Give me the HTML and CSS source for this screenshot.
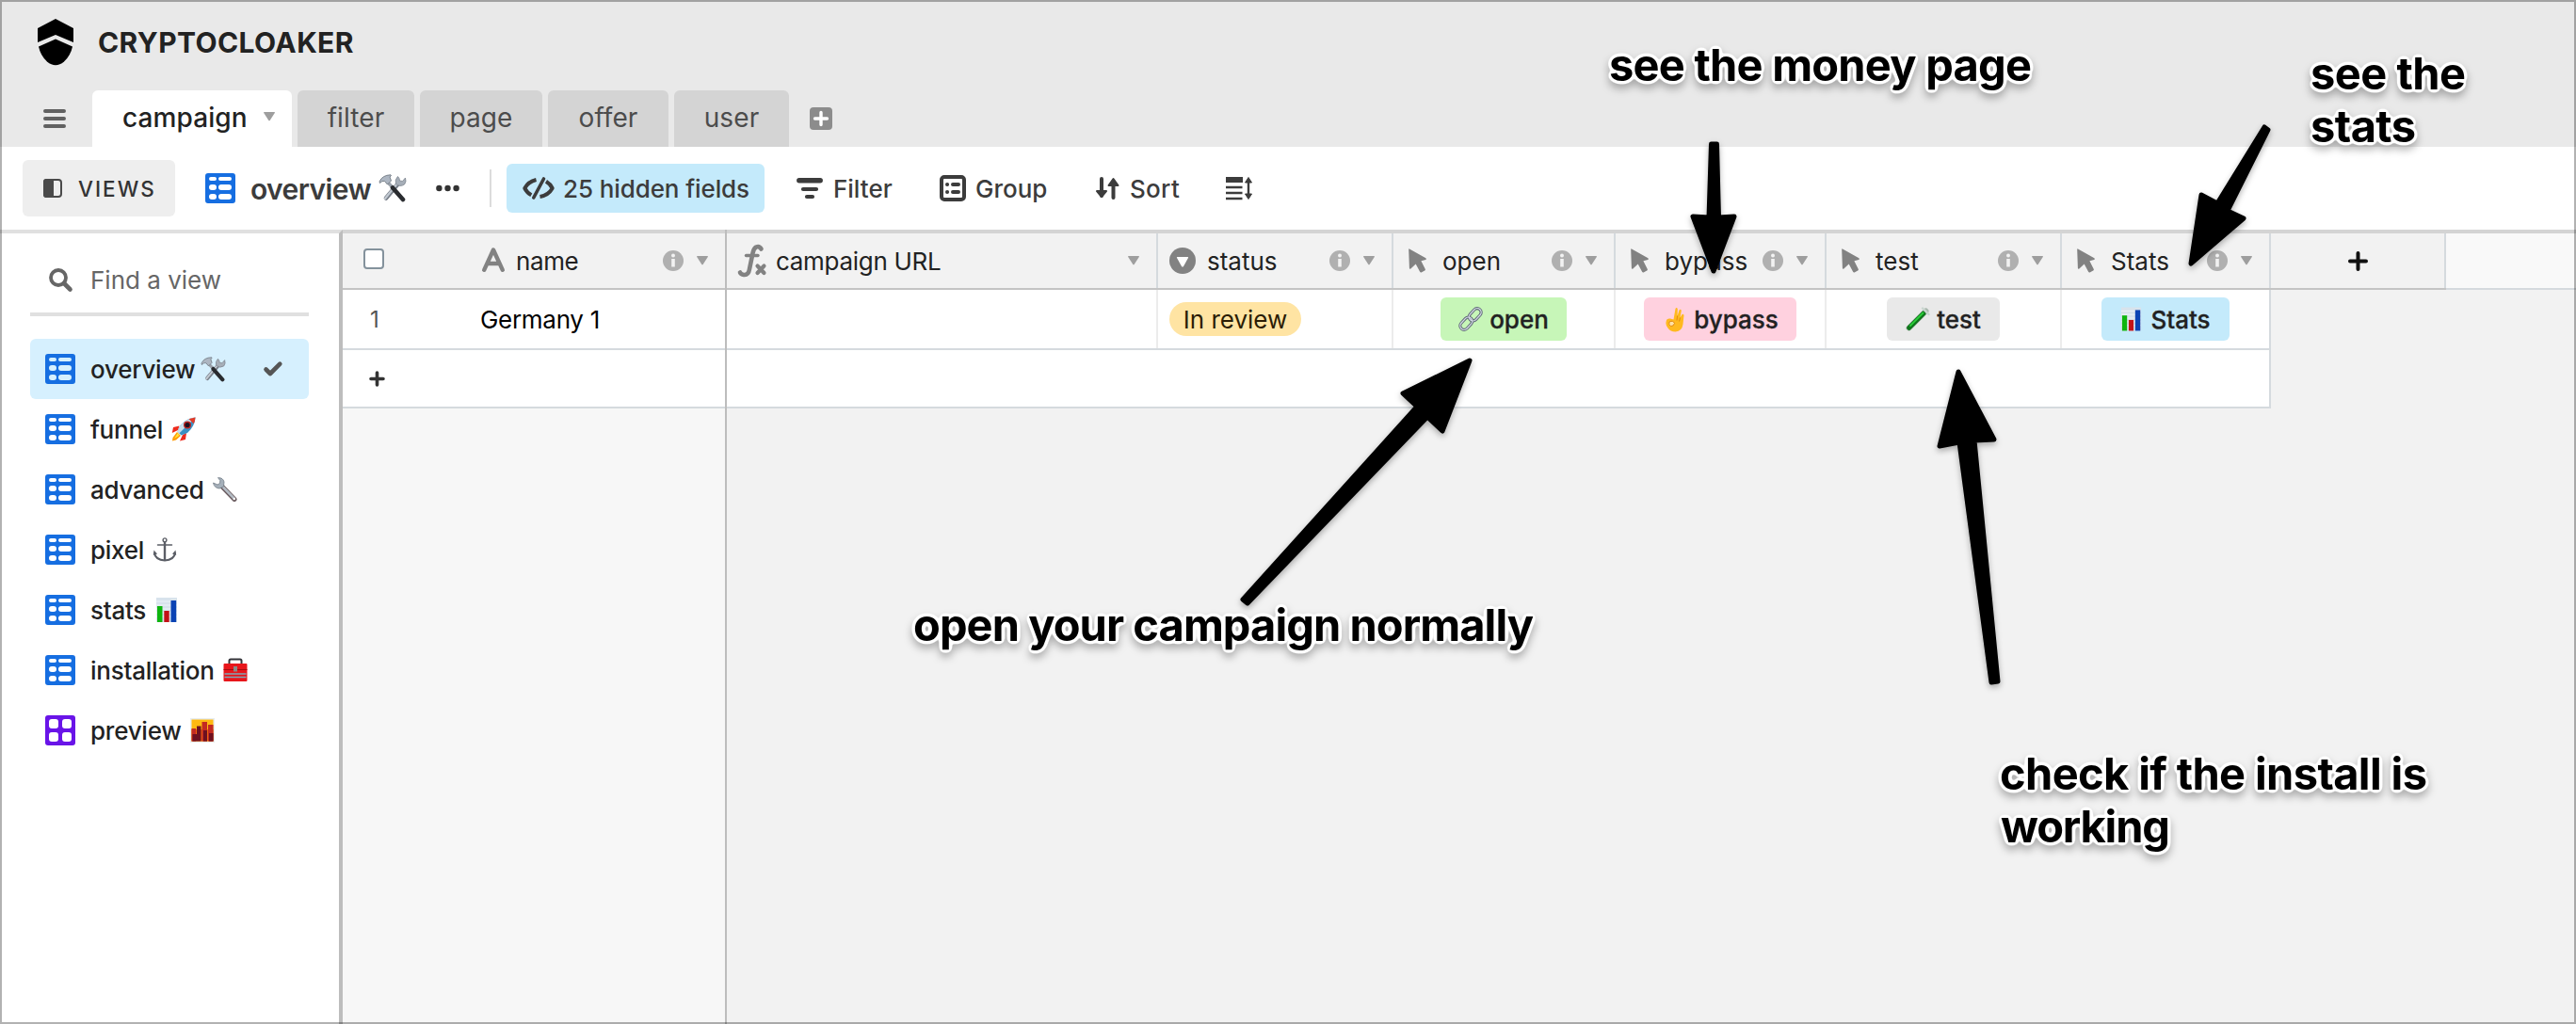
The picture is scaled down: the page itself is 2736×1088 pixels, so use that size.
FILE: index.html
```html
<!DOCTYPE html>
<html lang="en">
<head>
<meta charset="utf-8">
<title>CRYPTOCLOAKER</title>
<link rel="stylesheet" href="styles.css">
</head>
<body>
<svg width="0" height="0" class="defs">
  <defs>
    <symbol id="grid" viewBox="0 0 32 32"><path fill="currentColor" fill-rule="evenodd" d="M3 0H29a3 3 0 0 1 3 3V29a3 3 0 0 1-3 3H3a3 3 0 0 1-3-3V3a3 3 0 0 1 3-3ZM6 4a2 2 0 0 0 0 4H10a2 2 0 0 0 0-4ZM16 4a2 2 0 0 0 0 4H26a2 2 0 0 0 0-4ZM7 12a3 3 0 0 0 0 6H9a3 3 0 0 0 0-6ZM17 12a3 3 0 0 0 0 6H25a3 3 0 0 0 0-6ZM7 22a3 3 0 0 0 0 6H9a3 3 0 0 0 0-6ZM17 22a3 3 0 0 0 0 6H25a3 3 0 0 0 0-6Z"/></symbol>
    <symbol id="gallery" viewBox="0 0 32 32"><rect width="32" height="32" rx="3" fill="currentColor"/><g fill="#fff"><rect x="4" y="4" width="10" height="10" rx="3"/><rect x="18" y="4" width="10" height="10" rx="3"/><rect x="4" y="18" width="10" height="10" rx="3"/><rect x="18" y="18" width="10" height="10" rx="3"/></g></symbol>
    <symbol id="info" viewBox="0 0 22 22"><circle cx="11" cy="11" r="11" fill="#b0b0b0"/><circle cx="11" cy="5.6" r="2" fill="#f2f2f2"/><path d="M9.2 9h3.6v8.5h-3.6z" fill="#f2f2f2"/></symbol>
    <symbol id="caret" viewBox="0 0 12 10"><path d="M.6 0H11.4Q12.3 0 11.8 1L6.8 8.8Q6 9.9 5.2 8.8L.2 1Q-.3 0 .6 0Z" fill="#9e9e9e"/></symbol>
    <symbol id="cursor" viewBox="0 0 20 26"><path d="M1 .4 18.4 10.3Q19.6 11.3 18.2 12L13.4 13.3 17.8 22Q18.2 23 17.2 23.6L13.6 25.4Q12.6 25.7 12.1 24.8L7.7 16.6 2.4 21.4Q1.1 22.3.9 20.8L.2 1.2Q.2 0 1 .4Z" fill="#828282"/></symbol>
    <symbol id="tools" viewBox="0 0 30 30"><path d="M8 25.5 21 10" stroke="#777e88" stroke-width="4.6" stroke-linecap="round"/><path d="M7 26 20 10" stroke="#c3cad2" stroke-width="2.2" stroke-linecap="round"/><path d="M20.5 2.5Q17 6 18.5 10.5 23 14 27.5 11 30 8 28.5 4L25.5 7.5 22.5 7 22 4.5Z" fill="#a6aeb8" stroke="#7d858f" stroke-width=".8"/><path d="M9.5 8.5 15 14" stroke="#9aa1aa" stroke-width="3.4"/><path d="M15 14.5 26 27" stroke="#292b2f" stroke-width="4.6" stroke-linecap="round"/><path d="M1 8Q4 1 13 .8 14.5 1.2 12 3L13.5 7 9.5 11 6.5 7.5Q4 6.5 1.500 9.500Z" fill="#adb6c2" stroke="#717982" stroke-width=".9"/></symbol>
    <symbol id="rocket" viewBox="0 0 26 26"><path d="M8.500 9.500 2 11 .8 17 7 14ZM16 17 15 24 9 25.400 12 19Z" fill="#ee2b1d"/><path d="M6 16 1.500 22 1 25.600 5 24.500 10 20Z" fill="#ff9c0a"/><path d="M7 17 3 23 8 20Z" fill="#ffe938"/><path d="M25.500.5Q16 1 9.500 9L6.500 15.500 10.500 19.500 17 17Q25 10 25.500.5Z" fill="#3a91c3"/><path d="M25.500.5Q16 1 9.500 9L6.500 15.500 8.500 17.300 22 4Z" fill="#c7dfec"/><path d="M25.500.5Q22 1 18.500 2.300L23.800 7.200Q25.300 4 25.500.5Z" fill="#e23b28"/><circle cx="17" cy="8.500" r="4" fill="#b9221f"/><circle cx="17" cy="8.500" r="2.600" fill="#1c1020"/></symbol>
    <symbol id="wrench" viewBox="0 0 26 26"><path d="M9 9 23 23.500" stroke="#6b5c60" stroke-width="5" stroke-linecap="round"/><path d="M9 8.500 22.500 22.500" stroke="#b4bcc4" stroke-width="2.600" stroke-linecap="round"/><path d="M5.500.6Q11 .5 12 5L11.500 10 7 12Q1.500 11.500.5 6L5 8 7.500 6.500 7.800 3.500Z" fill="#a5b0ba" stroke="#727c86" stroke-width=".8"/><circle cx="22.800" cy="23" r="1.200" fill="#fff"/></symbol>
    <symbol id="anchor" viewBox="0 0 26 26"><g fill="none" stroke="#5b5e66" stroke-width="2"><circle cx="13" cy="2.800" r="1.900" stroke-width="1.400"/><path d="M13 5V24.500" stroke-width="2.400"/><path d="M5.500 8H20.500" stroke-width="1.500" stroke-linecap="round"/><path d="M1.800 16Q3 24 13 24.500 23 24 24.200 16"/></g><path d="M.8 19 1.500 13.500 5 17.500ZM25.200 19 24.500 13.500 21 17.500Z" fill="#5b5e66"/></symbol>
    <symbol id="chart" viewBox="0 0 24 26"><path d="M1 0H23V26H1Z" fill="#d8e3ec"/><path d="M1 4H23M1 8H23M1 12H23M1 16H23M1 20H23" stroke="#eef4f8" stroke-width="1"/><path d="M2 9H7.500V26H2Z" fill="#0fb50f"/><path d="M9.300 14H14.700V26H9.300Z" fill="#c31217"/><path d="M16.500 3H22.200V26H16.500Z" fill="#0b43b4"/></symbol>
    <symbol id="toolbox" viewBox="0 0 26 26"><path d="M6.500 7V3Q6.500 1.500 8 1.500H18Q19.500 1.500 19.500 3V7" fill="none" stroke="#343439" stroke-width="2"/><rect x=".5" y="6" width="25" height="19" rx="1" fill="#e8161b"/><path d="M.5 12.500H25.500" stroke="#a60c10"/><path d="M1.500 17H24.500M1.500 20.500H24.500" stroke="#7fa9b8" stroke-width="1.600"/><rect x="11" y="9" width="4" height="5.500" fill="#8b8b88"/></symbol>
    <symbol id="sunset" viewBox="0 0 26 26"><rect width="26" height="26" fill="#e8edef"/><rect x="1.500" y="1.500" width="23" height="23" fill="#ffb911"/><path d="M1.500 12H24.500V24.500H1.500Z" fill="#f0650e"/><path d="M1.500 11H6V24.500H1.500ZM19 7H24.500V24.500H19ZM12.500 4H18V24.500H12.500Z" fill="#c32a22"/><path d="M7 8.500H11.500V24.500H7ZM2.500 17H7V24.500H2.500ZM14 13H18V24.500H14ZM20 16H24.500V24.500H20Z" fill="#6d1020"/></symbol>
    <symbol id="link" viewBox="0 0 26 26"><g fill="none" stroke="#5f6877" stroke-width="3.200"><rect x="-4.200" y="-7.500" width="8.400" height="15" rx="4.200" transform="translate(17.700 8.300) rotate(43)"/><rect x="-4.200" y="-7.500" width="8.400" height="15" rx="4.200" transform="translate(8.300 17.700) rotate(43)"/></g><g fill="none" stroke="#d3dbe4" stroke-width="1.300"><rect x="-4.200" y="-7.500" width="8.400" height="15" rx="4.200" transform="translate(17.700 8.300) rotate(43)"/><rect x="-4.200" y="-7.500" width="8.400" height="15" rx="4.200" transform="translate(8.300 17.700) rotate(43)"/></g></symbol>
    <symbol id="ok" viewBox="0 0 20 26"><path d="M8.500 13 10.500 1.500Q11.500-.5 12.800 1.500L12.600 9 14.500 3Q16 1.500 16.800 3.500L15.500 11 17.500 7.500Q19 6.500 19.500 8.500L18.500 18Q17.500 25.500 10.500 26 5 26 2.500 22 0 19 .5 16L1 13.500Q2 11.500 5 12Z" fill="#ffb91f"/><path d="M4 15.500Q8 13.500 9.500 17 8.500 20.500 5.500 20 3 18.500 4 15.500Z" fill="#ffe1a8"/><path d="M4 15.500Q8 13.500 9.500 17 8.500 20.500 5.500 20 3 18.500 4 15.500ZM12.600 9 12 14M15.500 11 14.500 15" fill="none" stroke="#e28b10" stroke-width="1"/></symbol>
    <symbol id="tube" viewBox="0 0 26 26"><path d="M3.500 22.500 21.500 4.500" stroke="#a9b8ae" stroke-width="6" stroke-linecap="round"/><path d="M3.700 22.300 19 7" stroke="#10751c" stroke-width="5" stroke-linecap="round"/><path d="M5 20 18.500 6.500" stroke="#2ad13a" stroke-width="1.800" stroke-linecap="round"/><path d="M18 1.500 24.500 8" stroke="#c9d6cf" stroke-width="2.400" stroke-linecap="round"/></symbol>
    <filter id="halo" filterUnits="userSpaceOnUse" x="0" y="0" width="2736" height="1088" color-interpolation-filters="sRGB">
      <feGaussianBlur in="SourceAlpha" stdDeviation="2.900"/>
      <feComponentTransfer><feFuncA type="linear" slope="16" intercept="-.7"/></feComponentTransfer>
      <feComposite in2="SourceAlpha" operator="over" result="shape"/>
      <feFlood flood-color="#fff"/>
      <feComposite in2="shape" operator="in" result="outline"/>
      <feMerge><feMergeNode in="outline"/><feMergeNode in="SourceGraphic"/></feMerge>
    </filter>
  </defs>
</svg>

<div class="app">
  <header class="top">
    <div class="brand">
      <svg class="logo" width="38" height="50" viewBox="0 0 38 50"><path d="M19 0 38 10V25L19 17 0 25V10Z"/><path d="M19 21.500 37 29.500Q35 39 28 45.500 19 53 10 45.500 3 39 1 29.500Z"/></svg>
      <h1>CRYPTOCLOAKER</h1>
    </div>
    <nav class="tabs">
      <svg class="menu" width="24" height="20" viewBox="0 0 24 20"><path d="M2 2H22M2 10H22M2 18H22" stroke="#616161" stroke-width="4" stroke-linecap="round"/></svg>
      <div class="tab active"><span>campaign</span><svg width="12" height="10"><use href="#caret"/></svg></div>
      <div class="tab t-filter">filter</div>
      <div class="tab t-page">page</div>
      <div class="tab t-offer">offer</div>
      <div class="tab t-user">user</div>
      <svg class="add-tab" width="24" height="24" viewBox="0 0 24 24"><rect width="24" height="24" rx="4" fill="#8c8c8c"/><path d="M12 5.500V18.500M5.500 12H18.500" stroke="#fff" stroke-width="3.400" stroke-linecap="round"/></svg>
    </nav>
  </header>

  <div class="toolbar">
    <div class="views"><svg width="20" height="20" viewBox="0 0 20 20"><rect x="1" y="1" width="18" height="18" rx="3" fill="none" stroke="#4a4a4a" stroke-width="2"/><path d="M3 0H11V20H3Q0 20 0 17V3Q0 0 3 0Z" fill="#4a4a4a"/></svg><span>VIEWS</span></div>
    <div class="current"><svg class="blue" width="32" height="32"><use href="#grid"/></svg><strong>overview</strong><svg class="emoji-lg" width="30" height="30"><use href="#tools"/></svg></div>
    <svg class="dots" width="25" height="8" viewBox="0 0 25 8"><g fill="#333"><circle cx="3.400" cy="4" r="3.200"/><circle cx="12.500" cy="4" r="3.200"/><circle cx="21.600" cy="4" r="3.200"/></g></svg>
    <i class="sep"></i>
    <div class="tool hidden-fields"><svg width="34" height="24" viewBox="0 0 34 24"><g fill="none" stroke="#3c3c3c" stroke-width="4"><path d="M14.500 3Q6 5 2.300 12 4.500 16.500 9.300 19.300" stroke-linejoin="round"/><path d="M25 4.800Q29.500 7.500 31.700 12 27.500 19.500 18.500 20.900" stroke-linejoin="round"/><path d="M22.500 2 11.800 22" stroke-linecap="round" stroke-width="3.600"/></g></svg><span>25 hidden fields</span></div>
    <div class="tool filter"><svg width="28" height="22" viewBox="0 0 28 22"><path d="M7 12H21M11 20H17" stroke="#3c3c3c" stroke-width="4.200" stroke-linecap="round"/><path d="M2.800 2.800H25.200" stroke="#3c3c3c" stroke-width="5.400" stroke-linecap="round"/></svg><span>Filter</span></div>
    <div class="tool group"><svg width="28" height="28" viewBox="0 0 28 28"><rect x="2" y="2" width="24" height="24" rx="3" fill="none" stroke="#3c3c3c" stroke-width="4"/><path d="M8 10H8.100M14 10H20M8 18H8.100M14 18H20" stroke="#3c3c3c" stroke-width="4" stroke-linecap="round"/></svg><span>Group</span></div>
    <div class="tool sort"><svg width="25" height="24" viewBox="0 0 25 24"><path d="M6 2V20M18.500 5V22" stroke="#3c3c3c" stroke-width="4" stroke-linecap="round"/><path d="M1 15H11L6 21ZM13.500 9H23.500L18.500 2Z" fill="#3c3c3c" stroke="#3c3c3c" stroke-width="2" stroke-linejoin="round"/></svg><span>Sort</span></div>
    <svg class="height" width="28" height="24" viewBox="0 0 28 24"><path d="M0 3H18" stroke="#3c3c3c" stroke-width="6"/><path d="M0 11H17.500M0 17H17.500M0 23H17.500M24 4V20" stroke="#3c3c3c" stroke-width="2.400"/><path d="M20.500 6 24 .5 27.500 6ZM20.500 18 24 23.500 27.500 18Z" fill="#3c3c3c" stroke="#3c3c3c"/></svg>
  </div>

  <main class="body">
    <aside class="sidebar">
      <div class="search"><svg width="25" height="25" viewBox="0 0 25 25"><circle cx="10" cy="10" r="8" fill="none" stroke="#666" stroke-width="3.800"/><path d="M16 16 22.500 22.500" stroke="#666" stroke-width="4.600" stroke-linecap="round"/></svg><span>Find a view</span></div>
      <ul>
        <li class="on"><svg class="blue" width="32" height="32"><use href="#grid"/></svg><span>overview</span><svg width="27" height="27"><use href="#tools"/></svg><svg class="check" width="20" height="16" viewBox="0 0 20 16"><path d="M2.500 8.500 7 13 17.300 2.700" fill="none" stroke="#555" stroke-width="4.600" stroke-linejoin="round" stroke-linecap="round"/></svg></li>
        <li><svg class="blue" width="32" height="32"><use href="#grid"/></svg><span>funnel</span><svg width="26" height="26"><use href="#rocket"/></svg></li>
        <li><svg class="blue" width="32" height="32"><use href="#grid"/></svg><span>advanced</span><svg width="26" height="26"><use href="#wrench"/></svg></li>
        <li><svg class="blue" width="32" height="32"><use href="#grid"/></svg><span>pixel</span><svg width="26" height="26"><use href="#anchor"/></svg></li>
        <li><svg class="blue" width="32" height="32"><use href="#grid"/></svg><span>stats</span><svg width="26" height="26"><use href="#chart"/></svg></li>
        <li><svg class="blue" width="32" height="32"><use href="#grid"/></svg><span>installation</span><svg width="26" height="26"><use href="#toolbox"/></svg></li>
        <li><svg class="purple" width="32" height="32"><use href="#gallery"/></svg><span>preview</span><svg width="26" height="26"><use href="#sunset"/></svg></li>
      </ul>
    </aside>

    <section class="frozen">
      <div class="head"><i class="checkbox"></i><svg class="type-a" width="24" height="26" viewBox="0 0 24 26"><path d="M2.200 23.800 12 2.500 21.800 23.800M5.500 17H18.500" fill="none" stroke="#828282" stroke-width="4.400" stroke-linecap="round" stroke-linejoin="round"/></svg><span>name</span><svg class="info" width="22" height="22"><use href="#info"/></svg><svg width="12" height="10"><use href="#caret"/></svg></div>
      <div class="row"><span class="num">1</span><span>Germany 1</span></div>
      <div class="row add"><svg width="17" height="17" viewBox="0 0 17 17"><path d="M8.500 2V15M2 8.500H15" stroke="#333" stroke-width="3.600" stroke-linecap="round"/></svg></div>
    </section>

    <section class="scroll">
      <div class="head">
        <div class="cell url"><svg class="fx" width="30" height="34" viewBox="0 0 30 34"><path d="M24.500 4.500Q22.500 1 19 2.500 16.500 4 15.500 9L12 26Q11 32.500 6 32 3 31.500 2 29.500" fill="none" stroke="#828282" stroke-width="4.600" stroke-linecap="round"/><path d="M8.500 11.500H21" stroke="#828282" stroke-width="3.400" stroke-linecap="round"/><path d="M20.500 22.500 27.500 30M27.500 22.500 20.500 30" stroke="#828282" stroke-width="4.200" stroke-linecap="round"/></svg><span>campaign URL</span><svg class="last" width="12" height="10"><use href="#caret"/></svg></div>
        <div class="cell status"><svg class="select" width="28" height="28" viewBox="0 0 28 28"><circle cx="14" cy="14" r="14" fill="#828282"/><path d="M8.500 10H19.500Q20.500 10 20 11L15 20Q14 21 13 20L8 11Q7.500 10 8.500 10Z" fill="#fff"/></svg><span>status</span><svg class="info" width="22" height="22"><use href="#info"/></svg><svg width="12" height="10"><use href="#caret"/></svg></div>
        <div class="cell open"><svg class="cur" width="20" height="26"><use href="#cursor"/></svg><span>open</span><svg class="info" width="22" height="22"><use href="#info"/></svg><svg width="12" height="10"><use href="#caret"/></svg></div>
        <div class="cell bypass"><svg class="cur" width="20" height="26"><use href="#cursor"/></svg><span>bypass</span><svg class="info" width="22" height="22"><use href="#info"/></svg><svg width="12" height="10"><use href="#caret"/></svg></div>
        <div class="cell test"><svg class="cur" width="20" height="26"><use href="#cursor"/></svg><span>test</span><svg class="info" width="22" height="22"><use href="#info"/></svg><svg width="12" height="10"><use href="#caret"/></svg></div>
        <div class="cell stats"><svg class="cur" width="20" height="26"><use href="#cursor"/></svg><span>Stats</span><svg class="info" width="22" height="22"><use href="#info"/></svg><svg width="12" height="10"><use href="#caret"/></svg></div>
        <div class="cell plus"><svg width="21" height="21" viewBox="0 0 21 21"><path d="M10.500 2V19M2 10.500H19" stroke="#111" stroke-width="4" stroke-linecap="round"/></svg></div>
        <div class="rest"></div>
      </div>
      <div class="row">
        <div class="cell url"></div>
        <div class="cell status"><span class="pill">In review</span></div>
        <div class="cell open"><span class="btn green"><svg width="26" height="28"><use href="#link"/></svg><b>open</b></span></div>
        <div class="cell bypass"><span class="btn pink"><svg width="20" height="27"><use href="#ok"/></svg><b>bypass</b></span></div>
        <div class="cell test"><span class="btn gray"><svg width="26" height="26"><use href="#tube"/></svg><b>test</b></span></div>
        <div class="cell stats"><span class="btn cyan"><svg width="23" height="26"><use href="#chart"/></svg><b>Stats</b></span></div>
      </div>
      <div class="row add"></div>
    </section>
  </main>
</div>

<svg class="notes" width="2736" height="1088" viewBox="0 0 2736 1088">
  <g class="arrows">
    <path d="M1817.500 153H1823.500L1825.500 231 1842 230 1820 288 1798 230 1815 231Z"/>
    <path d="M2405 135 2409 138 2366 224 2383 232 2327 280 2338 207 2355 216Z"/>
    <path d="M1320 637 1325 641 1516 443 1532 458 1561 383 1490 418 1505 432Z"/>
    <path d="M2115 725 2122 724 2097 468 2118 467 2080 395 2060 474 2081 470Z"/>
  </g>
  <g class="labels">
    <text x="1709" y="86" textLength="449">see the money page</text>
    <text x="2454" y="95" textLength="165">see the</text>
    <text x="2454" y="151" textLength="112">stats</text>
    <text x="970" y="681" textLength="659">open your campaign normally</text>
    <text x="2124" y="839" textLength="454">check if the install is</text>
    <text x="2125" y="895" textLength="180">working</text>
  </g>
</svg>
</body>
</html>
```

FILE: styles.css
```css
* { box-sizing: border-box; }
body { margin: 0; width: 2736px; height: 1088px; overflow: hidden; position: relative; font-family: Inter, "Liberation Sans", sans-serif; font-size: 26px; color: #222; }
svg { flex: none; display: block; overflow: visible; }
.defs { position: absolute; }
span, strong, b, h1 { white-space: nowrap; }
.app { display: flex; flex-direction: column; height: 1088px; }
.app::after { content: ""; position: absolute; inset: 0; border: 2px solid rgba(0, 0, 0, .3); z-index: 3; }

.top { background: #e9e9e9; height: 156px; padding-top: 19px; display: flex; flex-direction: column; justify-content: space-between; }
.brand { display: flex; align-items: center; padding-left: 40px; gap: 26px; height: 52px; }
.brand h1 { margin: 0; font-size: 30px; font-weight: 700; color: #222; letter-spacing: .4px; }
.tabs { display: flex; height: 60px; gap: 6px; align-items: stretch; padding-left: 46px; }
.tabs > svg { align-self: center; margin-top: -1px; }
.menu { margin-right: 22px; }
.tab { background: #d4d4d4; border-radius: 6px 6px 0 0; display: flex; align-items: center; justify-content: center; font-size: 28px; padding-bottom: 2px; color: #4c4c4c; letter-spacing: .1px; }
.tab.active { background: #fff; width: 212px; padding-left: 32px; justify-content: flex-start; gap: 17px; color: #222; font-weight: 500; }
.tab svg { margin-top: -2px; }
.t-filter { width: 124px; }
.t-page { width: 130px; }
.t-offer { width: 128px; }
.t-user { width: 122px; }
.add-tab { margin-left: 16px; }

.toolbar { background: #fff; height: 88px; display: flex; align-items: center; padding-left: 24px; color: #3c3c3c; font-weight: 500; }
.toolbar span, .toolbar strong { padding-top: 1px; }
.views { width: 162px; height: 60px; background: #eee; border-radius: 6px; display: flex; align-items: center; padding-left: 22px; gap: 17px; color: #333; font-size: 22.5px; letter-spacing: 2px; }
.current { display: flex; align-items: center; margin-left: 32px; width: 214px; }
.current strong { font-size: 30px; font-weight: 600; margin-left: 16px; width: 136px; letter-spacing: -.6px; }
.dots { margin-left: 31px; }
.sep { width: 2px; height: 40px; background: #dcdcdc; margin: 0 16px 0 32px; }
.tool { display: flex; align-items: center; }
.hidden-fields { width: 274px; height: 52px; background: #c4eafb; border-radius: 6px; padding-left: 17px; gap: 9px; letter-spacing: -.1px; }
.filter { margin-left: 34px; width: 152px; gap: 11px; }
.group { width: 166px; gap: 10px; }
.sort { width: 138px; gap: 11px; letter-spacing: .3px; }

.body { display: flex; flex: 1; min-height: 0; background: #f2f2f2; }
.sidebar { width: 364px; background: #fff; border-top: 4px solid #e0e0e0; border-right: 4px solid #bdbdbd; padding: 12px 32px 0; flex: none; }
.search { height: 76px; border-bottom: 4px solid #e0e0e0; display: flex; align-items: center; padding: 2px 0 0 20px; gap: 19px; color: #666; }
.sidebar ul { list-style: none; margin: 24px 0 0; padding: 0; }
.sidebar li { height: 64px; display: flex; align-items: center; padding-left: 16px; border-radius: 6px; font-weight: 500; }
.sidebar li span { margin: 0 9px 0 16px; letter-spacing: -.25px; }
.sidebar .on { background: #d6f0fe; }
.sidebar .on span { margin-right: 6px; }
.sidebar .check { margin-left: auto; margin-right: 28px; }
.blue { color: #166ee1; }
.purple { color: #6914e8; }

.frozen { width: 408px; background: #f7f7f7; border-right: 2px solid #bdbdbd; flex: none; }
.head { height: 64px; border-top: 4px solid #d4d4d4; border-bottom: 2px solid #c4c4c4; background: #f2f2f2; display: flex; align-items: center; }
.frozen .head { padding: 0 18px 0 22px; }
.checkbox { width: 22px; height: 22px; border: 2px solid #84929c; border-radius: 4px; background: #fff; margin: -4px 104px 0 0; }
.type-a { margin-top: -2px; }
.frozen .head span { margin-left: 12px; letter-spacing: -.4px; }
.info { margin: 0 14px 0 auto; }
.row { height: 64px; background: #fff; border-bottom: 2px solid #d5dade; display: flex; align-items: center; }
.frozen .row { color: #000; letter-spacing: -.3px; }
.frozen .num { width: 117px; margin-left: 29px; font-size: 24px; color: #555; }
.row.add { height: 62px; }
.row.add svg { margin-left: 28px; }

.scroll { flex: 1; min-width: 0; }
.cell { display: flex; align-items: center; height: 100%; border-right: 2px solid #d5dade; padding: 0 18px 0 12px; flex: none; }
.row .cell { border-right-color: #ececec; padding: 0; justify-content: center; }
.url { width: 458px; letter-spacing: -.3px; }
.status { width: 250px; }
.row .status { justify-content: flex-start; padding-left: 12px; }
.open { width: 236px; }
.bypass { width: 224px; }
.test { width: 250px; }
.stats { width: 222px; }
.plus { width: 186px; justify-content: center; padding: 0; }
.rest { flex: 1; height: 60px; margin-bottom: -2px; background: #f9f9f9; border-bottom: 2px solid #d5dade; }
.cur { margin: 0 16px 0 4px; }
.select { margin-right: 12px; }
.fx { margin-right: 10px; }
.last { margin-left: auto; }
.scroll .row { width: 1640px; border-right: 2px solid #d5dade; }
.row .stats { width: 220px; border-right: 0; }
.pill { height: 36px; width: 140px; border-radius: 18px; background: #ffe4a3; color: #2b1d05; display: flex; align-items: center; justify-content: center; }
.btn { height: 46px; border-radius: 6px; display: flex; align-items: center; justify-content: center; gap: 7px; }
.btn b { font-weight: 500; -webkit-text-stroke: .3px #222; }
.green { width: 134px; background: #c7f6b8; }
.pink { width: 162px; background: #ffd1df; gap: 10px; padding-left: 4px; }
.gray { width: 120px; background: #e9e9e9; }
.cyan { width: 136px; background: #c4eafb; gap: 9px; }

.notes { position: absolute; left: 0; top: 0; z-index: 4; }
.arrows { fill: #000; stroke: #000; stroke-width: 5px; stroke-linejoin: round; filter: drop-shadow(0 3px 3px rgba(0, 0, 0, .3)); }
.labels { font-size: 47px; font-weight: 700; filter: url(#halo) drop-shadow(0 5px 4px rgba(0, 0, 0, .28)); }
```
